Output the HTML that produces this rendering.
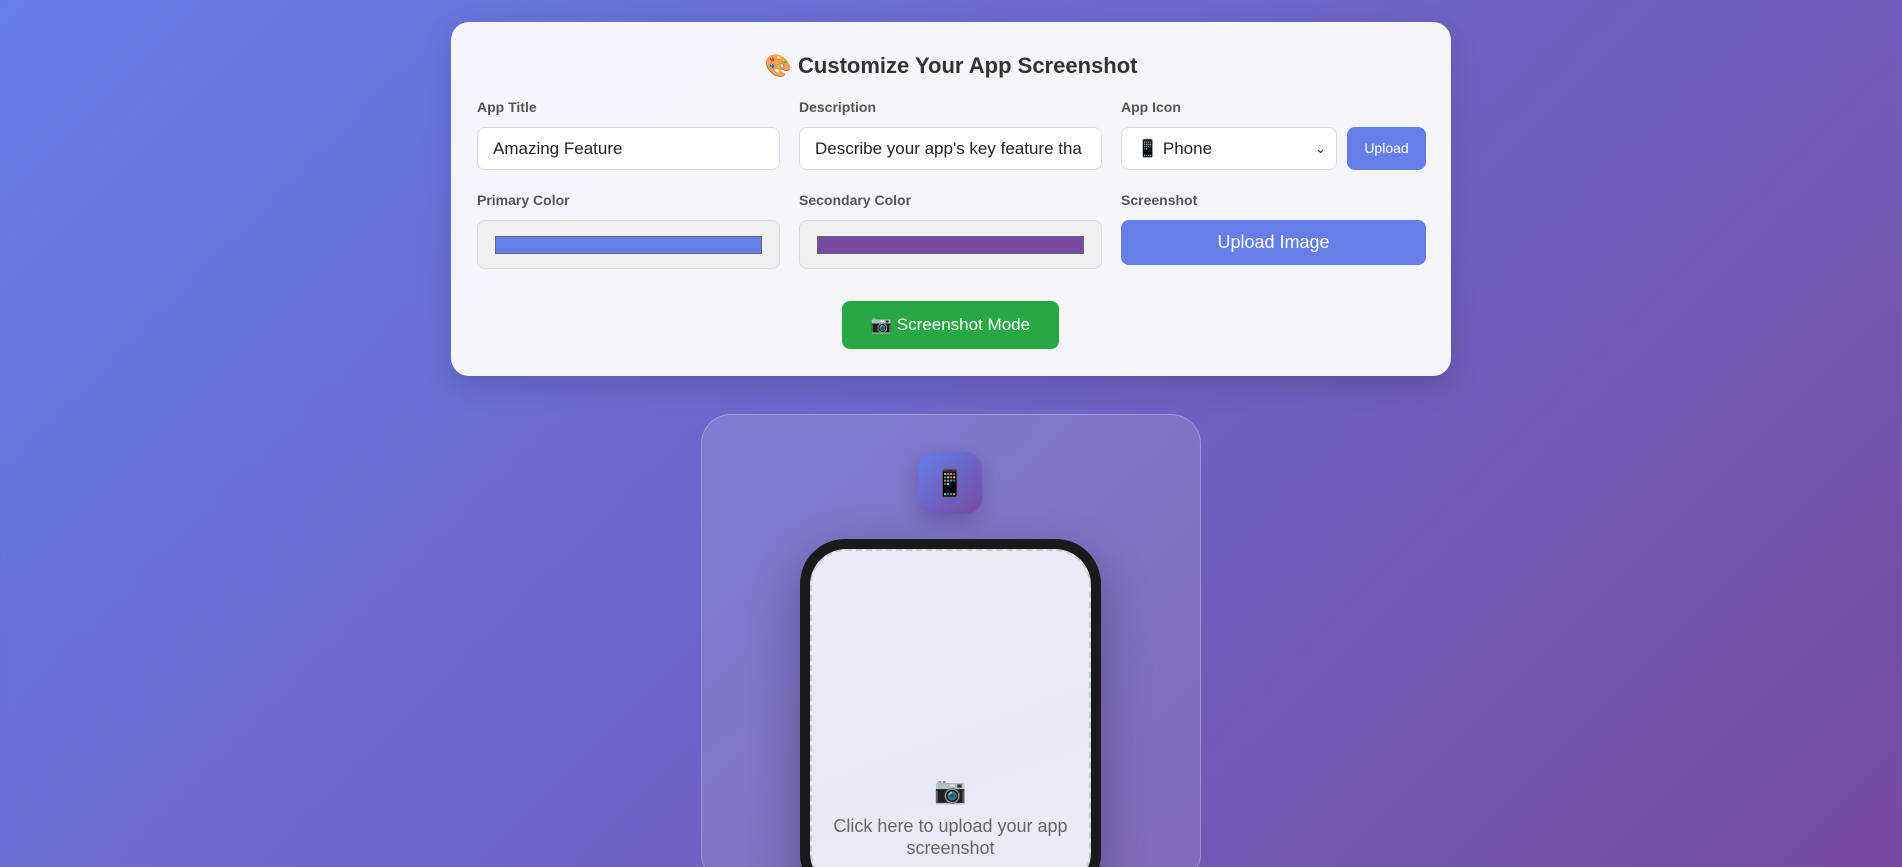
<!DOCTYPE html>
<html><head><meta charset="utf-8"><style>
*{box-sizing:border-box;margin:0;padding:0}
html,body{width:1902px;height:867px;overflow:hidden}
body{background:linear-gradient(135deg,#667eea 0%,#764ba2 100%);font-family:"Liberation Sans","Noto Sans CJK SC",sans-serif;position:relative}
.card{position:absolute;left:451px;top:22px;width:1000px;height:354px;background:rgba(248,249,253,0.98);border-radius:18px;box-shadow:0 10px 30px rgba(0,0,0,.15);padding:0 26px}
h2{position:absolute;top:31px;left:0;width:100%;text-align:center;font-size:22px;font-weight:bold;color:#333}
.lbl{position:absolute;font-size:14px;color:#555;font-weight:bold}
.inp{position:absolute;height:43px;background:#fff;border:1px solid #ddd;border-radius:8px;font-size:17px;color:#222;padding:0 15px;line-height:41px;white-space:nowrap;overflow:hidden}
.col{position:absolute;height:49px;background:#f0f0f0;border:1px solid #ddd;border-radius:8px}
.col div{position:absolute;left:17px;right:17px;top:15px;height:18px;border:1px solid #666}
.btn{position:absolute;background:#667eea;color:#fff;border-radius:8px;text-align:center}
.prev{position:absolute;left:701px;top:414px;width:500px;height:470px;border-radius:30px;background:rgba(255,255,255,.12);border:1px solid rgba(255,255,255,.25)}
.icon{position:absolute;left:918px;top:452px;width:64px;height:62px;border-radius:16px;background:linear-gradient(135deg,#667eea,#764ba2);box-shadow:0 8px 20px rgba(0,0,0,.2);text-align:center;line-height:62px;font-size:26px}
.phone{position:absolute;left:800px;top:539px;width:301px;height:360px;background:#1a1a1a;border-radius:45px;padding:10px;box-shadow:0 20px 50px rgba(0,0,0,.3)}
.scr{width:100%;height:100%;border-radius:36px;border:2px dashed #ccc;background:linear-gradient(160deg,#eeeaf7,#ebe8f5 60%,#e8ebf6);text-align:center;color:#666;font-size:18px;line-height:22px;padding-top:228px}
</style></head><body>
<div class="card">
<h2>🎨 Customize Your App Screenshot</h2>
</div>
<div class="lbl" style="left:477px;top:99px">App Title</div>
<div class="lbl" style="left:799px;top:99px">Description</div>
<div class="lbl" style="left:1121px;top:99px">App Icon</div>
<div class="inp" style="left:477px;top:127px;width:303px">Amazing Feature</div>
<div class="inp" style="left:799px;top:127px;width:303px">Describe your app's key feature tha</div>
<div class="inp" style="left:1121px;top:127px;width:216px">📱 Phone<span style="position:absolute;right:10px;font-size:13px">⌄</span></div>
<div class="btn" style="left:1347px;top:127px;width:79px;height:43px;line-height:43px;font-size:14px">Upload</div>
<div class="lbl" style="left:477px;top:192px">Primary Color</div>
<div class="lbl" style="left:799px;top:192px">Secondary Color</div>
<div class="lbl" style="left:1121px;top:192px">Screenshot</div>
<div class="col" style="left:477px;top:220px;width:303px"><div style="background:#667eea"></div></div>
<div class="col" style="left:799px;top:220px;width:303px"><div style="background:#764ba2"></div></div>
<div class="btn" style="left:1121px;top:220px;width:305px;height:45px;line-height:45px;font-size:18px">Upload Image</div>
<div class="btn" style="left:842px;top:301px;width:217px;height:48px;line-height:48px;font-size:17px;background:#28a745">📷 Screenshot Mode</div>
<div class="prev"></div>
<div class="icon">📱</div>
<div class="phone"><div class="scr"><div style="font-size:26px;margin-bottom:14px">📷</div>Click here to upload your app<br>screenshot</div></div>
</body></html>
